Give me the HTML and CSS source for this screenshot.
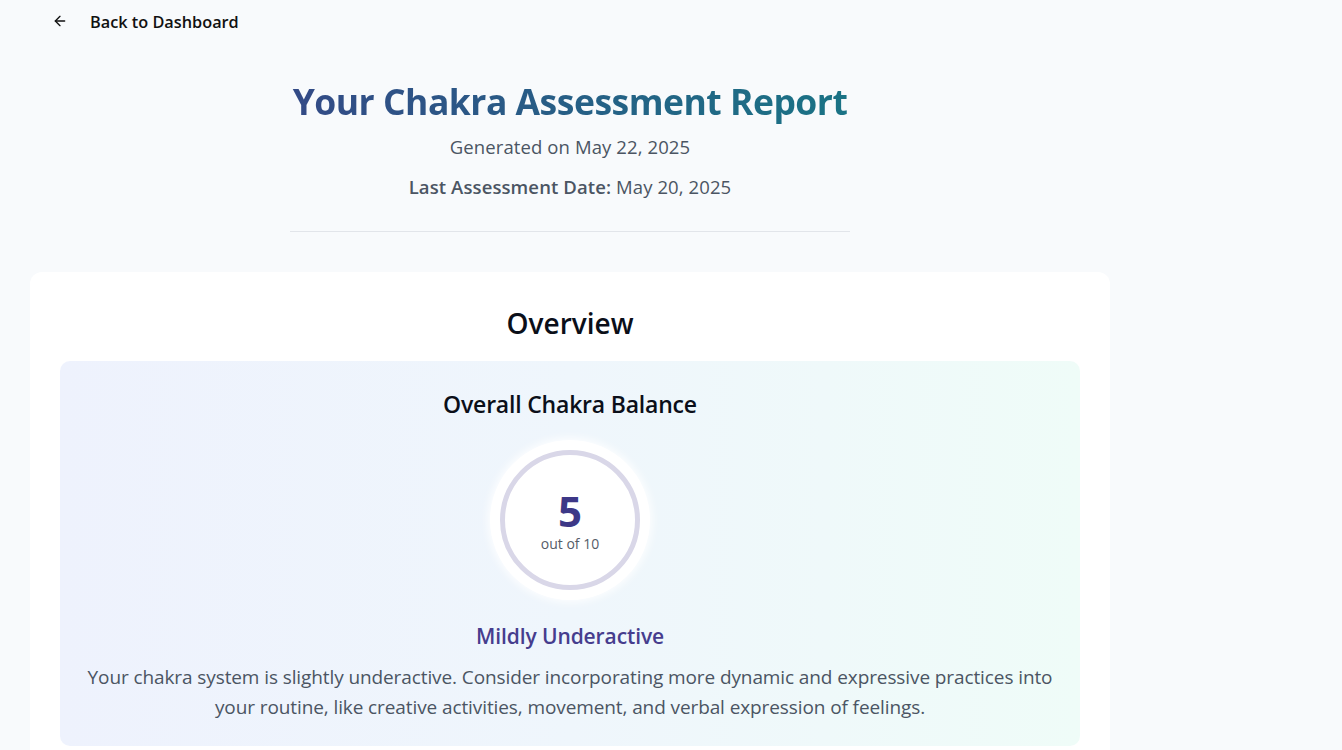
FILE: index.html
```html
<!DOCTYPE html>
<html lang="en">
<head>
<meta charset="utf-8">
<title>Chakra Assessment Report</title>
<link rel="stylesheet" href="styles.css">
</head>
<body>
<div class="page">
  <a class="back" href="#">
    <svg class="back-icon" width="16" height="16" viewBox="0 0 24 24" fill="none" stroke="currentColor" stroke-width="2" stroke-linecap="round" stroke-linejoin="round"><path d="M19 12H5"/><path d="M12 19l-7-7 7-7"/></svg>
    <span>Back to Dashboard</span>
  </a>
  <main class="container">
    <header class="report-header">
      <h1 class="title">Your Chakra Assessment Report</h1>
      <p class="generated">Generated on May 22, 2025</p>
      <p class="last"><strong>Last Assessment Date:</strong> May 20, 2025</p>
    </header>
    <section class="card">
      <h2 class="card-title">Overview</h2>
      <div class="balance">
        <h3 class="balance-title">Overall Chakra Balance</h3>
        <div class="score-outer">
          <div class="score-ring">
            <span class="score">5</span>
            <span class="score-sub">out of 10</span>
          </div>
        </div>
        <h4 class="status">Mildly Underactive</h4>
        <p class="desc">Your chakra system is slightly underactive. Consider incorporating more dynamic and expressive practices into your routine, like creative activities, movement, and verbal expression of feelings.</p>
      </div>
    </section>
  </main>
</div>
</body>
</html>
```
FILE: styles.css
```css
* { box-sizing: border-box; }
html, body { margin: 0; padding: 0; }
body {
  background: #f8fafc;
  font-family: "Open Sans", "Noto Sans", sans-serif;
  color: #111827;
}
.page { padding: 0 30px; }
.back {
  display: flex;
  align-items: center;
  gap: 22px;
  height: 44px;
  padding-left: 22px;
  color: #111;
  text-decoration: none;
  font-size: 16.3px;
  font-weight: 600;
  letter-spacing: 0;
}
.back-icon { margin-top: -2px; }
.container { width: 1080px; }
.report-header {
  width: 560px;
  margin: 30px auto 40px;
  text-align: center;
  border-bottom: 1px solid #e2e5ea;
  padding-bottom: 30px;
}
.title {
  margin: 0 0 5px;
  font-size: 35.5px;
  font-weight: 700;
  line-height: 54px;
  letter-spacing: -0.5px;
  white-space: nowrap;
  background: linear-gradient(90deg, #334a86, #1a7385);
  -webkit-background-clip: text;
  background-clip: text;
  color: transparent;
}
.generated, .last {
  margin: 0;
  font-size: 18.5px;
  line-height: 28px;
  color: #4b5563;
  letter-spacing: 0.1px;
}
.generated { margin-bottom: 12px; }
.last strong { font-weight: 600; }
.card {
  background: #fff;
  border-radius: 12px;
  padding: 31px 30px 30px;
}
.card-title {
  margin: 0 0 18px;
  text-align: center;
  font-size: 28px;
  font-weight: 600;
  line-height: 40px;
  letter-spacing: 0;
  color: #0b0f19;
}
.balance {
  border-radius: 10px;
  background: linear-gradient(90deg, #eef2fd, #eff6fc 50%, #effcf8);
  padding: 25px 24px 24px;
  text-align: center;
}
.balance-title {
  margin: 0 0 18px;
  font-size: 23px;
  font-weight: 600;
  line-height: 36px;
  letter-spacing: -0.2px;
  color: #0b0f19;
}
.score-outer {
  width: 160px;
  height: 160px;
  margin: 0 auto;
  border-radius: 50%;
  background: #fff;
  box-shadow: 0 0 8px 2px rgba(255,255,255,0.9);
  display: flex;
  align-items: center;
  justify-content: center;
}
.score-ring {
  width: 140px;
  height: 140px;
  border-radius: 50%;
  border: 5px solid #d9d7e8;
  display: flex;
  flex-direction: column;
  align-items: center;
  justify-content: center;
  padding-top: 2px;
}
.score {
  font-size: 42px;
  font-weight: 700;
  line-height: 44px;
  color: #3d3887;
}
.score-sub {
  margin-top: 2px;
  font-size: 14px;
  line-height: 18px;
  color: #555c68;
}
.status {
  margin: 20px 0 10px;
  font-size: 21px;
  font-weight: 600;
  line-height: 32px;
  color: #463d8e;
  letter-spacing: -0.1px;
}
.desc {
  margin: 0;
  font-size: 19px;
  line-height: 30px;
  color: #4b5563;
  letter-spacing: -0.1px;
}
```
